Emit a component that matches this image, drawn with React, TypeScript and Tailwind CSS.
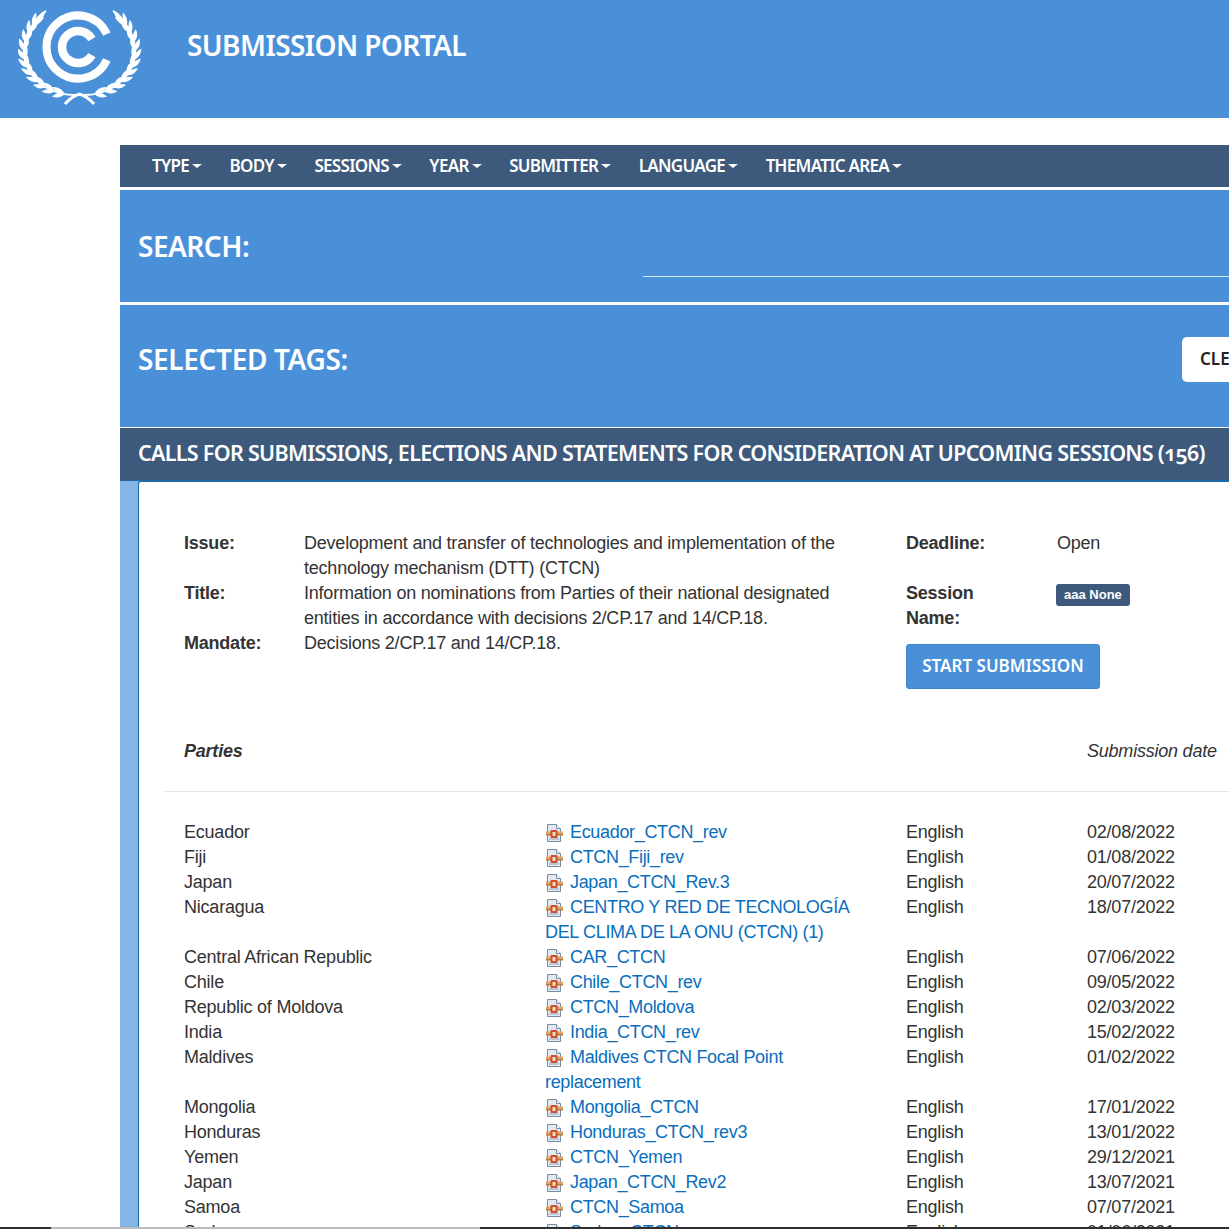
const headFont = "font-['Noto_Sans',sans-serif]";

const navItems = ["TYPE", "BODY", "SESSIONS", "YEAR", "SUBMITTER", "LANGUAGE", "THEMATIC AREA"];

const rows = [
  { party: "Ecuador", file: "Ecuador_CTCN_rev", date: "02/08/2022" },
  { party: "Fiji", file: "CTCN_Fiji_rev", date: "01/08/2022" },
  { party: "Japan", file: "Japan_CTCN_Rev.3", date: "20/07/2022" },
  { party: "Nicaragua", file: "CENTRO Y RED DE TECNOLOGÍA DEL CLIMA DE LA ONU (CTCN) (1)", date: "18/07/2022" },
  { party: "Central African Republic", file: "CAR_CTCN", date: "07/06/2022" },
  { party: "Chile", file: "Chile_CTCN_rev", date: "09/05/2022" },
  { party: "Republic of Moldova", file: "CTCN_Moldova", date: "02/03/2022" },
  { party: "India", file: "India_CTCN_rev", date: "15/02/2022" },
  { party: "Maldives", file: "Maldives CTCN Focal Point replacement", date: "01/02/2022" },
  { party: "Mongolia", file: "Mongolia_CTCN", date: "17/01/2022" },
  { party: "Honduras", file: "Honduras_CTCN_rev3", date: "13/01/2022" },
  { party: "Yemen", file: "CTCN_Yemen", date: "29/12/2021" },
  { party: "Japan", file: "Japan_CTCN_Rev2", date: "13/07/2021" },
  { party: "Samoa", file: "CTCN_Samoa", date: "07/07/2021" },
  { party: "Sudan", file: "Sudan_CTCN", date: "01/06/2021" },
];

// one side of the wreath: a curved stem with pairs of leaves along it
const stem = (t: number) => {
  const u = 1 - t;
  const p = [[76, 95], [27, 95], [3, 45], [46, 11]];
  const f = (i: number) =>
    u * u * u * p[0][i] + 3 * u * u * t * p[1][i] + 3 * u * t * t * p[2][i] + t * t * t * p[3][i];
  const d = (i: number) =>
    3 * u * u * (p[1][i] - p[0][i]) + 6 * u * t * (p[2][i] - p[1][i]) + 3 * t * t * (p[3][i] - p[2][i]);
  return { x: f(0), y: f(1), angle: (Math.atan2(d(1), d(0)) * 180) / Math.PI };
};

const leafTimes = [0.08, 0.16, 0.24, 0.32, 0.4, 0.48, 0.56, 0.64, 0.72, 0.8, 0.87];

const Branch = () => (
  <g fill="white">
    <path d="M76 95C27 95 3 45 46 11" fill="none" stroke="white" strokeWidth="1.8" />
    {leafTimes.map((t) => {
      const { x, y, angle } = stem(t);
      return (
        <g key={t} transform={`translate(${x} ${y})`}>
          <path d="M0 0Q7 -4.6 14 0Q7 4.6 0 0z" transform={`rotate(${angle + 20})`} />
          <path d="M0 0Q6 -4.2 13 0Q6 4.2 0 0z" transform={`rotate(${angle - 20})`} />
        </g>
      );
    })}
    <path d="M46 10Q35 15 34 27Q43 21 46 10z" />
    <path d="M80 94Q72 96 65 104" fill="none" stroke="white" strokeWidth="3" />
  </g>
);

const Logo = () => (
  <svg width="124" height="98" viewBox="18 10 124 98" className="shrink-0">
    <path d="M106.8 34.2A31.5 31.5 0 1 0 106.8 59.8" fill="none" stroke="white" strokeWidth="8" />
    <path d="M91.9 39A16 16 0 1 0 91.9 55" fill="none" stroke="white" strokeWidth="8.5" />
    <Branch />
    <g transform="translate(159 0) scale(-1 1)">
      <Branch />
    </g>
  </svg>
);

const FileIcon = () => (
  <svg width="18" height="18" viewBox="0 0 18 18" className="inline-block align-[-4px] mr-[7px]">
    <path d="M2.5 .5h9l4 4v13h-13z" fill="#e3e9f1" stroke="#7b8ba1" />
    <path d="M11.5 .5v4h4" fill="#f7f9fb" stroke="#7b8ba1" />
    <path d="M4 14h10v2H4z" fill="#b9c6d6" />
    <rect x="1" y="7.5" width="17" height="2.5" fill="#dca66a" />
    <rect x="1" y="10" width="17" height="1.5" fill="#b97a3c" />
    <rect x="5.5" y="6" width="7" height="8" rx="1" fill="#cf4f2c" />
    <rect x="7.5" y="8" width="3" height="4" fill="#f6dcc0" />
  </svg>
);

const Scrollbar = () => (
  <div className="absolute left-0 right-0 bottom-0 h-0.5 flex bg-[#2f2f2f]">
    <div className="w-[51px]" />
    <div className="w-[429px] bg-[#bdbdbd]" />
  </div>
);

export default function App() {
  return (
    <div className="relative w-[1229px] h-[1229px] overflow-hidden bg-white font-['Liberation_Sans',sans-serif] text-[18px] leading-[25px] tracking-[-0.22px] text-[#333]">
      <header className="h-[118px] bg-[#4a90d9] flex pl-[18px] pt-[10px]">
        <Logo />
        <h1 className={`${headFont} ml-[45px] mt-[15px] text-[28px] leading-[40px] font-semibold text-white tracking-[-0.6px]`}>
          SUBMISSION PORTAL
        </h1>
      </header>

      <main className="ml-[120px] mt-[27px] w-[1240px]">
        <nav className="h-[42px] bg-[#3d5a7c] flex items-center pl-[32px] pb-[2px] gap-[27.5px]">
          {navItems.map((item) => (
            <span key={item} className={`${headFont} flex items-center text-[17px] font-semibold text-white tracking-[-0.7px]`}>
              {item}
              <span className="ml-[3px] mt-[2px] w-0 h-0 border-x-[5px] border-x-transparent border-t-[4px] border-t-white" />
            </span>
          ))}
        </nav>

        <section className="mt-[3px] h-[112px] bg-[#4a90d9] relative flex items-center pl-[18px]">
          <h2 className={`${headFont} text-[28px] font-semibold text-white tracking-[-0.5px]`}>SEARCH:</h2>
          <div className="absolute left-[523px] right-0 top-[86px] border-b border-[#d5e5f6]" />
        </section>

        <section className="mt-[3px] h-[122px] bg-[#4a90d9] relative flex items-center pl-[18px] pb-[14px]">
          <h2 className={`${headFont} text-[28px] font-semibold text-white tracking-[-0.35px]`}>SELECTED TAGS:</h2>
          <button className={`${headFont} absolute left-[1062px] top-[32px] h-[45px] w-[120px] rounded-[5px] bg-white text-left pl-[18px] pb-[2px] text-[17px] font-semibold text-[#222] tracking-normal`}>
            CLEAR
          </button>
        </section>

        <section className="mt-px h-[53px] bg-[#3d5a7c] border-b border-[#1f6aa5] flex items-center pl-[18px] pb-[4px]">
          <h2 className={`${headFont} text-[21.5px] font-semibold text-white tracking-[-0.7px] whitespace-nowrap oldstyle-nums`}>
            CALLS FOR SUBMISSIONS, ELECTIONS AND STATEMENTS FOR CONSIDERATION AT UPCOMING SESSIONS (156)
          </h2>
        </section>

        <div className="bg-[#85b4e6] pl-[18px]">
          <article className="bg-white border-l border-t border-[#1f6aa5] rounded-tl-[3px] pl-[26px] pt-[49px] h-[760px]">
            <div className="flex">
              <div className="w-[741px] pl-[19px] pr-[50px] grid grid-cols-[120px_1fr] content-start">
                <b>Issue:</b>
                <span>Development and transfer of technologies and implementation of the technology mechanism (DTT) (CTCN)</span>
                <b>Title:</b>
                <span>Information on nominations from Parties of their national designated entities in accordance with decisions 2/CP.17 and 14/CP.18.</span>
                <b>Mandate:</b>
                <span>Decisions 2/CP.17 and 14/CP.18.</span>
              </div>
              <div className="grid grid-cols-[151px_1fr] content-start">
                <b className="mb-[25px]">Deadline:</b>
                <span>Open</span>
                <b className="w-[100px]">Session Name:</b>
                <span>
                  <span className="inline-block -ml-px h-[22px] leading-[21px] rounded-[3px] bg-[#3d5a7c] px-2 text-[13px] font-bold text-white tracking-normal">aaa None</span>
                </span>
                <button className={`${headFont} col-span-2 mt-[13px] h-[45px] w-[194px] rounded-[3px] bg-[#4a90d9] border border-[#3f83cc] pb-[2px] text-[17px] font-semibold text-white tracking-normal`}>
                  START SUBMISSION
                </button>
              </div>
            </div>

            <div className="mt-[44px] h-[59px] pt-[6px] border-b border-[#e3e3e3] flex italic">
              <b className="ml-[19px] w-[903px]">Parties</b>
              <span className="whitespace-nowrap">Submission date</span>
            </div>

            <div className="mt-[28px] pl-[19px] grid grid-cols-[361px_361px_181px_1fr]">
              {rows.map((row, i) => (
                <div key={i} className="contents">
                  <span>{row.party}</span>
                  <span className="pr-[40px]">
                    <FileIcon />
                    <a className="text-[#0a6ebd] tracking-[-0.33px]">{row.file}</a>
                  </span>
                  <span>English</span>
                  <span>{row.date}</span>
                </div>
              ))}
            </div>
          </article>
        </div>
      </main>
      <Scrollbar />
    </div>
  );
}
